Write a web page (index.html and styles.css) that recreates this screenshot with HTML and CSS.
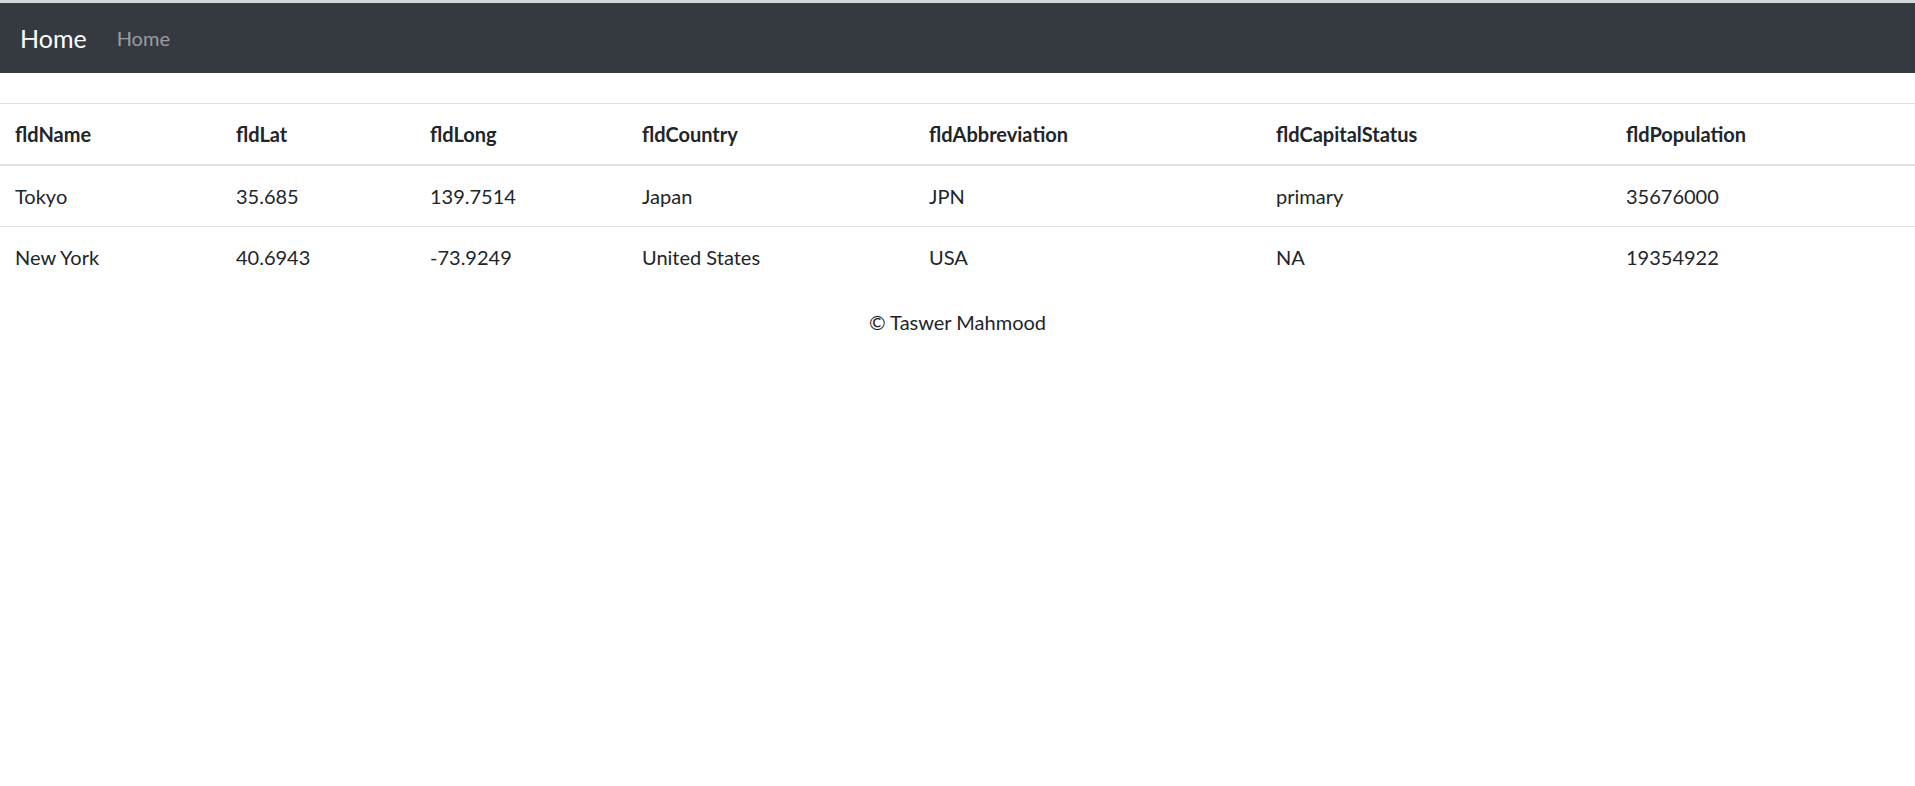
FILE: index.html
```html
<!DOCTYPE html>
<html lang="en">
<head>
<meta charset="utf-8">
<title>Home</title>
<link rel="stylesheet" href="styles.css">
</head>
<body>
<div class="topstrip"></div>
<nav class="navbar">
  <a class="brand" href="#">Home</a>
  <a class="nav-link" href="#">Home</a>
</nav>
<main class="content">
  <table class="table">
    <thead>
      <tr>
        <th class="c1">fldName</th>
        <th class="c2">fldLat</th>
        <th class="c3">fldLong</th>
        <th class="c4">fldCountry</th>
        <th class="c5">fldAbbreviation</th>
        <th class="c6">fldCapitalStatus</th>
        <th class="c7">fldPopulation</th>
      </tr>
    </thead>
    <tbody>
      <tr>
        <td>Tokyo</td><td>35.685</td><td>139.7514</td><td>Japan</td><td>JPN</td><td>primary</td><td>35676000</td>
      </tr>
      <tr>
        <td>New York</td><td>40.6943</td><td>-73.9249</td><td>United States</td><td>USA</td><td>NA</td><td>19354922</td>
      </tr>
    </tbody>
  </table>
</main>
<footer class="footer">© Taswer Mahmood</footer>
</body>
</html>
```
FILE: styles.css
```css
html, body {
  margin: 0;
  padding: 0;
}
body {
  font-family: Lato, "Open Sans", sans-serif;
  font-size: 20px;
  line-height: 30px;
  color: #212529;
  background: #fff;
}
.topstrip {
  height: 3px;
  background: #d6d7d9;
}
.navbar {
  display: flex;
  align-items: center;
  background: #343a40;
  padding: 10px 20px;
  height: 50px;
}
.brand {
  font-size: 25px;
  line-height: 37px;
  color: #fff;
  text-decoration: none;
  margin-right: 30px;
}
.nav-link {
  color: rgba(255, 255, 255, 0.5);
  text-decoration: none;
  font-size: 20px;
}
.content {
  padding-top: 30px;
}
.table {
  width: 100%;
  border-collapse: collapse;
  margin-bottom: 20px;
  table-layout: fixed;
}
.table th, .table td {
  box-sizing: border-box;
  text-align: left;
  padding: 15px;
  border-top: 1px solid #dee2e6;
  vertical-align: top;
}
.table th {
  font-weight: 700;
  border-bottom: 2px solid #dee2e6;
}
.c1 { width: 221px; }
.c2 { width: 194px; }
.c3 { width: 212px; }
.c4 { width: 287px; }
.c5 { width: 347px; }
.c6 { width: 350px; }
.c7 { width: auto; }
.footer {
  text-align: center;
}
```
